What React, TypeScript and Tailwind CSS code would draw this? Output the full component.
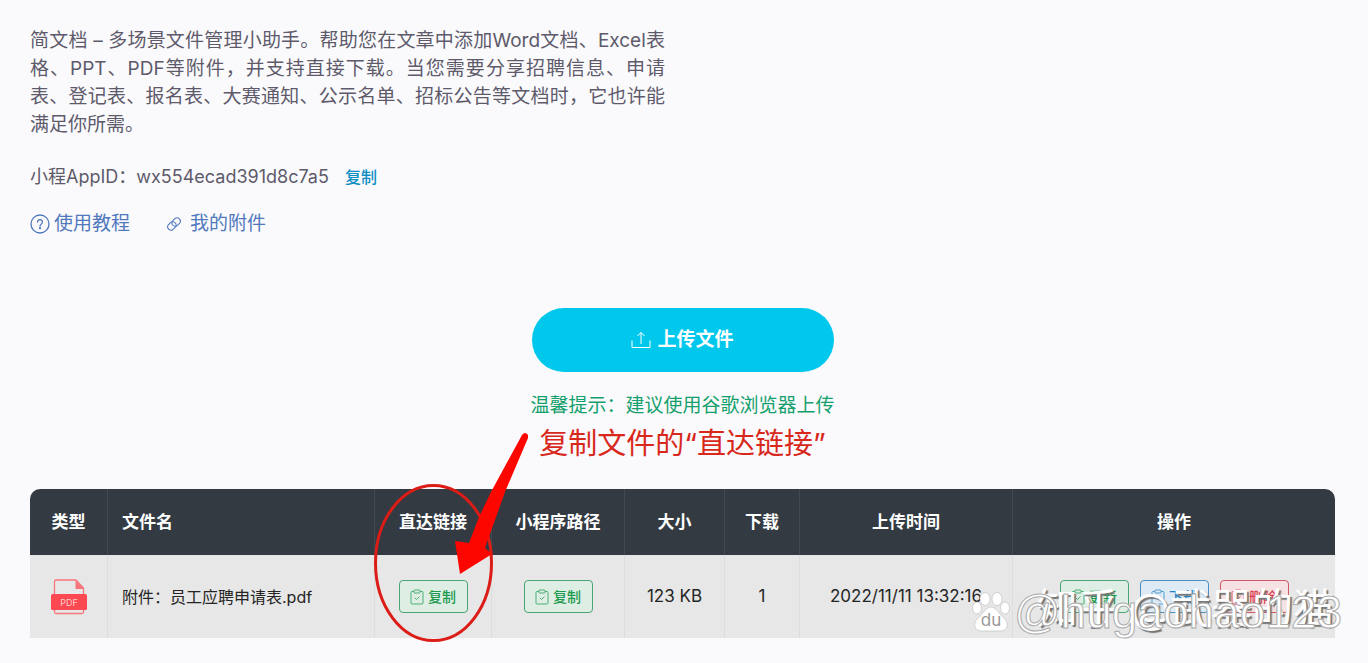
import type { ReactNode } from "react"

const cjk = "font-[Inter,'Noto_Sans_CJK_SC',sans-serif]"

function HelpIcon() {
  return (
    <svg viewBox="0 0 20 20" className="size-5" fill="none" stroke="currentColor" strokeWidth="1.3">
      <circle cx="10" cy="10" r="9" />
      <path d="M7.6 8a2.4 2.4 0 1 1 3.7 2c-.9.6-1.3 1-1.3 2" strokeLinecap="round" />
      <circle cx="10" cy="14.2" r=".5" fill="currentColor" />
    </svg>
  )
}

function LinkIcon() {
  return (
    <svg viewBox="0 0 24 24" className="size-4" fill="none" stroke="currentColor" strokeWidth="1.6" strokeLinecap="round">
      <path d="M10 13.5a5 5 0 0 0 7.3.5l3.2-3.2a5 5 0 0 0-7-7l-3.3 3.2a5 5 0 0 0-.6 6" />
      <path d="M14 10.5a5 5 0 0 0-7.3-.5l-3.2 3.2a5 5 0 0 0 7 7l3.3-3.2a5 5 0 0 0 .6-6" />
    </svg>
  )
}

function UploadIcon() {
  return (
    <svg viewBox="0 0 20 18" className="h-[18px] w-5" fill="none" stroke="currentColor" strokeWidth="1">
      <path d="M1 9.5v7h18v-7M10 13V1.5M6.5 5 10 1.5 13.5 5" />
    </svg>
  )
}

function ClipboardIcon() {
  return (
    <svg viewBox="0 0 14 16" className="h-4 w-3.5 opacity-75" fill="none" stroke="currentColor" strokeWidth="1">
      <path d="M4 2.5H2a1 1 0 0 0-1 1V14a1 1 0 0 0 1 1h10a1 1 0 0 0 1-1V3.5a1 1 0 0 0-1-1h-2" />
      <rect x="4" y="1" width="6" height="3" rx=".5" />
      <path d="m4.8 8.8 1.7 1.7 3-3" />
    </svg>
  )
}

function PdfIcon() {
  return (
    <svg viewBox="0 0 36 36" className="mx-auto size-9" role="img" aria-label="PDF">
      <path
        d="M3.5 16V2.5A1.5 1.5 0 0 1 5 1h20l7.5 8v7M3.5 30v3A1.5 1.5 0 0 0 5 34.5h26a1.5 1.5 0 0 0 1.5-1.5v-3"
        fill="none"
        stroke="#f7767c"
        strokeWidth="1.3"
      />
      <path d="M24.5 1v9H33z" fill="#f7767c" />
      <rect y="15" width="36" height="16" rx="1.5" fill="#fc4850" />
      <text x="18" y="26.5" textAnchor="middle" fontSize="9" fill="#fcc" fontFamily="Inter, sans-serif">PDF</text>
    </svg>
  )
}

function RowButton({ children, tone }: { children: ReactNode; tone: string }) {
  return (
    <button
      type="button"
      className={`inline-flex h-[33px] w-[69px] items-center justify-center gap-1 rounded border align-middle text-sm font-medium ${tone}`}
    >
      <ClipboardIcon />
      {children}
    </button>
  )
}

const green = "border-[#4aa577] bg-[#deeee5] text-[#1d9a50]"
const blue = "border-[#4b8fc0] bg-[#deebf5] text-[#2583c4]"
const red = "border-[#cf5965] bg-[#f6e2e3] text-[#d93c4c]"

const columns = [
  { title: "类型", width: "w-[78px]" },
  { title: "文件名", width: "" },
  { title: "直达链接", width: "w-[117px]" },
  { title: "小程序路径", width: "w-[133px]" },
  { title: "大小", width: "w-[100px]" },
  { title: "下载", width: "w-[75px]" },
  { title: "上传时间", width: "w-[213px]" },
  { title: "操作", width: "w-[322px]" },
]

const cell = "border-r border-[#dcdddf] last:border-r-0"

function FileTable() {
  return (
    <div className="relative mt-[25px]">
      <div className="overflow-hidden rounded-t-[10px]">
        <table className="w-full table-fixed border-separate border-spacing-0 text-center">
          <thead>
            <tr className="h-[66px] bg-[#333a42] text-white">
              {columns.map((col) => (
                <th
                  key={col.title}
                  className={`border-r border-[#414a51] pt-0.5 font-bold last:border-r-0 ${col.width} ${
                    col.title === "文件名" ? "pl-3.5 text-left" : ""
                  }`}
                >
                  {col.title}
                </th>
              ))}
            </tr>
          </thead>
          <tbody>
            <tr className="h-[83px] bg-[#e7e7e7] text-[#252525]">
              <td className={cell}><PdfIcon /></td>
              <td className={`${cell} pl-3.5 text-left text-base`}>附件：员工应聘申请表.pdf</td>
              <td className={cell}><RowButton tone={green}>复制</RowButton></td>
              <td className={cell}><RowButton tone={green}>复制</RowButton></td>
              <td className={cell}>123 KB</td>
              <td className={cell}>1</td>
              <td className={cell}>2022/11/11 13:32:16</td>
              <td className={cell}>
                <div className="flex justify-center gap-[11px]">
                  <RowButton tone={green}>更新</RowButton>
                  <RowButton tone={blue}>下载</RowButton>
                  <RowButton tone={red}>删除</RowButton>
                </div>
              </td>
            </tr>
          </tbody>
        </table>
      </div>
      <Callout />
      <Watermark />
    </div>
  )
}

// Hand-drawn ring and arrow over the direct link column
function Callout() {
  return (
    <svg
      viewBox="0 0 160 215"
      className="pointer-events-none absolute -top-[59px] left-[339px] h-[215px] w-40"
      fill="none"
    >
      <ellipse cx="64.5" cy="133" rx="58" ry="77.5" stroke="#dc1c16" strokeWidth="3" />
      <path d="M153 5q3-4 6 0v3L136 62 116 118l7 6-32 20-5-33 14 2 10-26 12-25Z" fill="#fe0600" />
    </svg>
  )
}

function Watermark() {
  return (
    <div className="pointer-events-none absolute top-[95px] -right-[7px] whitespace-nowrap text-white" aria-hidden="true">
      <div className="absolute right-2 bottom-2 text-[41px] leading-[48px] [text-shadow:2px_2px_1px_#777]">
        知乎 @武器的猫
      </div>
      <div className="relative flex items-center gap-1">
        <svg viewBox="0 0 38 40" className="h-10 w-[38px]" fill="#fff" stroke="#bbb" strokeWidth=".6">
          <ellipse cx="13" cy="7" rx="5" ry="6.5" />
          <ellipse cx="25" cy="7" rx="5" ry="6.5" />
          <ellipse cx="5" cy="16" rx="4.5" ry="6" />
          <ellipse cx="33" cy="16" rx="4.5" ry="6" />
          <path d="M19 15c5 0 8 7 13 11 6 6 3 13-3 13H9c-6 0-9-7-3-13 5-4 8-11 13-11Z" />
          <text x="19" y="34" textAnchor="middle" fontSize="17" fill="#999" stroke="none" fontFamily="Inter, sans-serif">du</text>
        </svg>
        <span className="font-['Liberation_Sans',sans-serif] text-[46px] leading-[56px] [-webkit-text-stroke:1px_#aaa]">
          @hugaohao123
        </span>
      </div>
    </div>
  )
}

export default function App() {
  return (
    <main className={`min-h-screen overflow-x-hidden bg-[#fafafc] px-[30px] pt-[27px] pr-[33px] text-[17px] ${cjk}`} lang="zh-CN">
      <section className="text-[19px] leading-7 text-[#5e5a6b]">
        <p className="max-w-[635px] text-justify">
          简文档 – 多场景文件管理小助手。帮助您在文章中添加Word文档、Excel表格、PPT、PDF等附件，并支持直接下载。当您需要分享招聘信息、申请表、登记表、报名表、大赛通知、公示名单、招标公告等文档时，它也许能满足你所需。
        </p>
        <p className="mt-6 flex items-center gap-4">
          <span className="text-lg leading-7">小程AppID：wx554ecad391d8c7a5</span>
          <button type="button" className="text-base leading-7 font-medium text-[#0d8ec4]">复制</button>
        </p>
        <nav className="mt-[19px] flex gap-9 text-[#5078bd]">
          <a href="#guide" className="flex items-center gap-1"><HelpIcon />使用教程</a>
          <a href="#files" className="flex items-center gap-2"><LinkIcon />我的附件</a>
        </nav>
      </section>
      <section className="mt-[70px] flex flex-col items-center">
        <button type="button" className="flex h-16 w-[302px] items-center justify-center gap-1.5 rounded-full bg-[#00c8ed] text-[19px] font-bold text-white">
          <UploadIcon />
          上传文件
        </button>
        <p className="mt-5 text-[19px] leading-7 text-[#14a06c]">温馨提示：建议使用谷歌浏览器上传</p>
        <p className="mt-1 text-[29px] leading-10 text-[#d8281c]">复制文件的“直达链接”</p>
      </section>
      <FileTable />
    </main>
  )
}
